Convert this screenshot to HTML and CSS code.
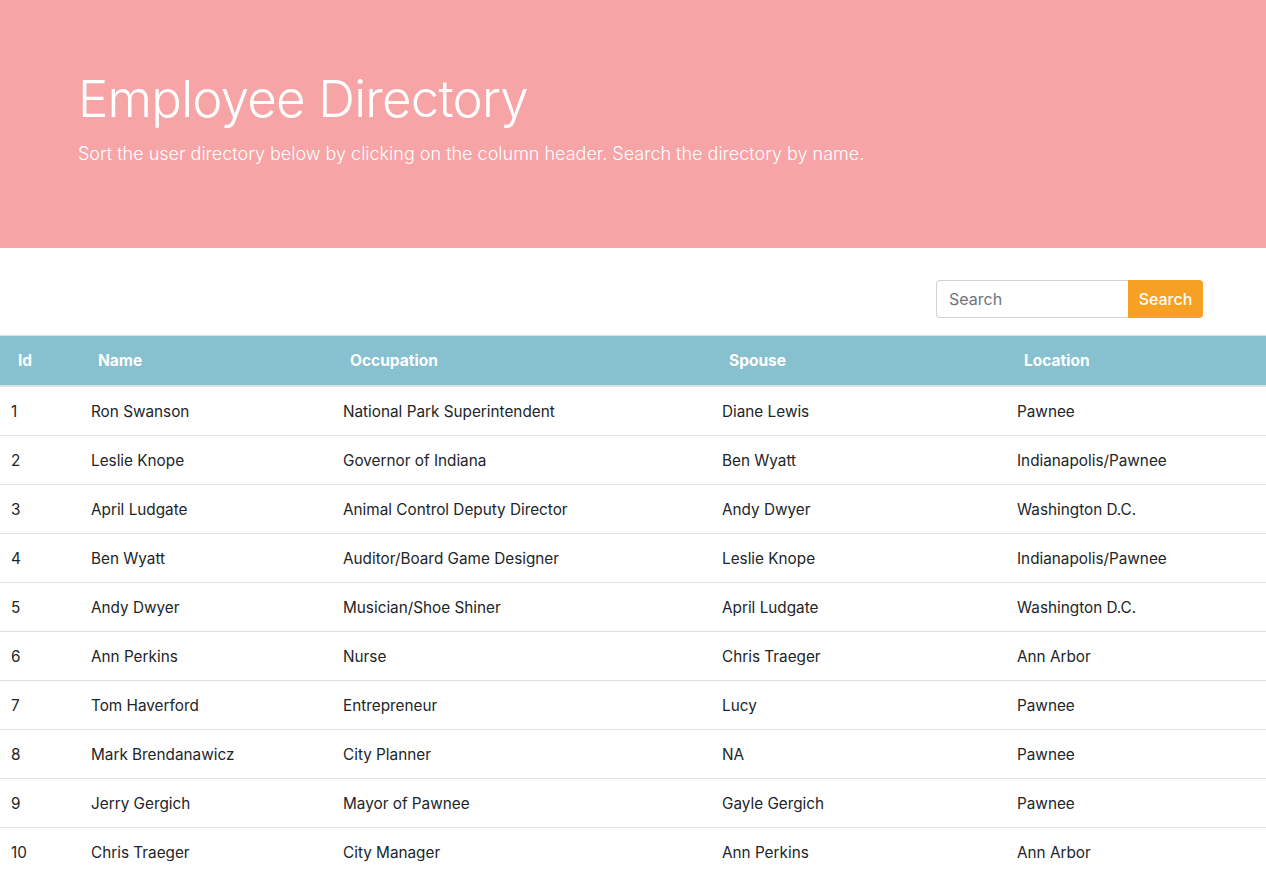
FILE: index.html
```html
<!DOCTYPE html>
<html lang="en">
<head>
<meta charset="utf-8">
<title>Employee Directory</title>
<link rel="stylesheet" href="styles.css">
</head>
<body>
<header class="jumbotron">
  <h1 class="title">Employee Directory</h1>
  <p class="lead">Sort the user directory below by clicking on the column header. Search the directory by name.</p>
</header>
<div class="search-bar">
  <form class="search-form">
    <input class="search-input" type="text" placeholder="Search">
    <button class="search-btn" type="button">Search</button>
  </form>
</div>
<table class="table">
  <thead>
    <tr><th class="c-id">Id</th><th class="c-name">Name</th><th class="c-occ">Occupation</th><th class="c-sp">Spouse</th><th class="c-loc">Location</th></tr>
  </thead>
  <tbody>
    <tr><td>1</td><td>Ron Swanson</td><td>National Park Superintendent</td><td>Diane Lewis</td><td>Pawnee</td></tr>
    <tr><td>2</td><td>Leslie Knope</td><td>Governor of Indiana</td><td>Ben Wyatt</td><td>Indianapolis/Pawnee</td></tr>
    <tr><td>3</td><td>April Ludgate</td><td>Animal Control Deputy Director</td><td>Andy Dwyer</td><td>Washington D.C.</td></tr>
    <tr><td>4</td><td>Ben Wyatt</td><td>Auditor/Board Game Designer</td><td>Leslie Knope</td><td>Indianapolis/Pawnee</td></tr>
    <tr><td>5</td><td>Andy Dwyer</td><td>Musician/Shoe Shiner</td><td>April Ludgate</td><td>Washington D.C.</td></tr>
    <tr><td>6</td><td>Ann Perkins</td><td>Nurse</td><td>Chris Traeger</td><td>Ann Arbor</td></tr>
    <tr><td>7</td><td>Tom Haverford</td><td>Entrepreneur</td><td>Lucy</td><td>Pawnee</td></tr>
    <tr><td>8</td><td>Mark Brendanawicz</td><td>City Planner</td><td>NA</td><td>Pawnee</td></tr>
    <tr><td>9</td><td>Jerry Gergich</td><td>Mayor of Pawnee</td><td>Gayle Gergich</td><td>Pawnee</td></tr>
    <tr><td>10</td><td>Chris Traeger</td><td>City Manager</td><td>Ann Perkins</td><td>Ann Arbor</td></tr>
  </tbody>
</table>
</body>
</html>
```
FILE: styles.css
```css
* { box-sizing: border-box; }
body {
  margin: 0;
  font-family: Inter, "Noto Sans", sans-serif;
  font-size: 16px;
  line-height: 1.5;
  color: #212529;
  background: #fff;
}
.jumbotron {
  background: #f6a4a6;
  color: #fff;
  height: 248px;
  padding: 68px 78px 0;
}
.title {
  margin: 0 0 11px;
  font-size: 51px;
  font-weight: 300;
  line-height: 1.2;
  letter-spacing: -0.8px;
}
.lead {
  margin: 0;
  font-size: 18px;
  line-height: 27px;
  font-weight: 300;
}
.search-bar {
  display: flex;
  justify-content: flex-end;
  padding: 32px 63px 17px 0;
}
.search-form { display: flex; }
.search-input {
  width: 192px;
  height: 38px;
  padding: 6px 12px;
  border: 1px solid #ced4da;
  border-right: none;
  border-radius: 4px 0 0 4px;
  font-family: inherit;
  font-size: 16px;
  color: #495057;
  outline: none;
}
.search-input::placeholder { color: #6c757d; }
.search-btn {
  width: 75px;
  height: 38px;
  border: none;
  border-radius: 0 4px 4px 0;
  background: #f6a024;
  color: #fff;
  font-family: inherit;
  font-size: 16px;
  font-weight: 500;
  padding: 0;
}
.table {
  width: 100%;
  border-collapse: collapse;
  table-layout: fixed;
}
.table th, .table td {
  padding: 13px 11px 11px;
  line-height: 24px;
  text-align: left;
  vertical-align: top;
  white-space: nowrap;
}
.table thead th {
  background: #87c0cf;
  color: #fff;
  font-family: Inter, Roboto, sans-serif;
  font-weight: 700;
  font-size: 15.5px;
  padding: 13px 11px 12px 18px;
  border-top: 1px solid #dee2e6;
  border-bottom: 2px solid #dee2e6;
}
.table td {
  border-bottom: 1px solid #dee2e6;
  font-size: 15.3px;
}
.c-id { width: 80px; }
.c-name { width: 252px; }
.c-occ { width: 379px; }
.c-sp { width: 295px; }
.c-loc { width: 260px; }
```
